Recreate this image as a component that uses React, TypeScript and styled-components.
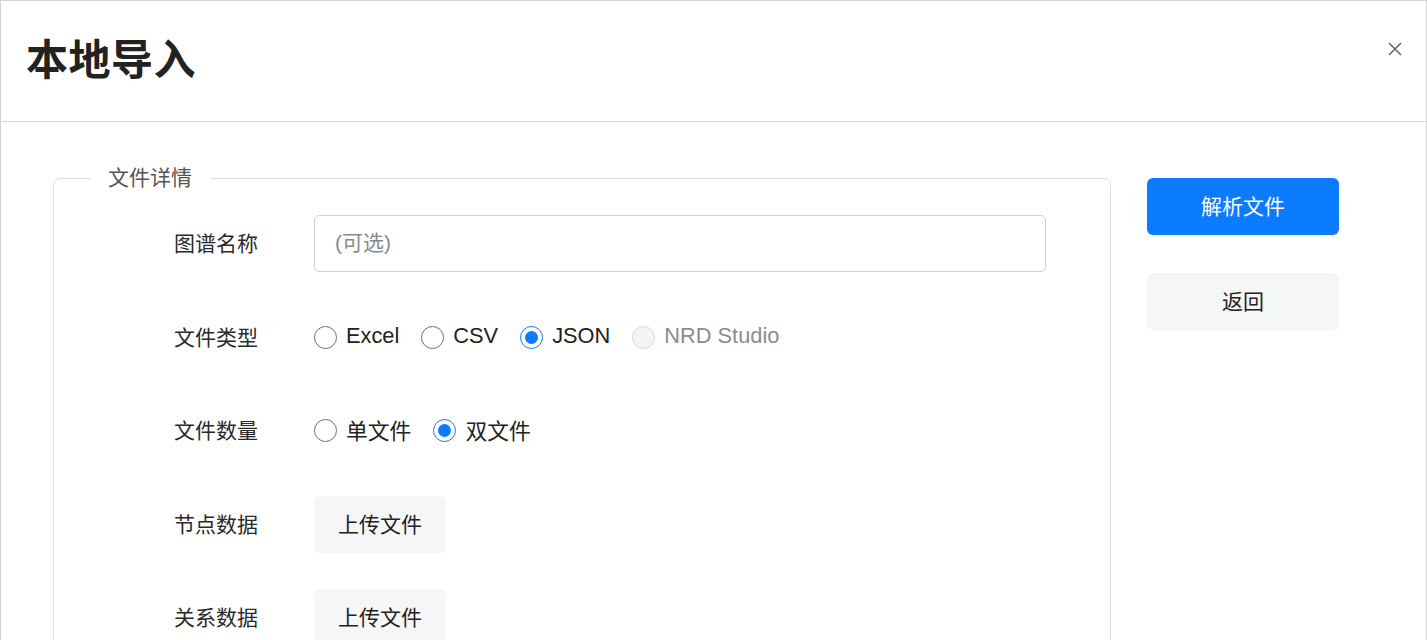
import React from "react";
import styled, { createGlobalStyle } from "styled-components";

const Global = createGlobalStyle`
  html, body { margin: 0; padding: 0; background: #fff; }
  body { font-family: "Liberation Sans", "Noto Sans CJK SC", sans-serif; color: #333; }
  * { box-sizing: border-box; }
`;

const Modal = styled.div`
  width: 1427px;
  height: 640px;
  overflow: hidden;
  border: 1px solid #d4d4d4;
  border-bottom: none;
  background: #fff;
`;

const Header = styled.div`
  height: 121px;
  border-bottom: 1px solid #d8d8d8;
  display: flex;
  align-items: center;
  justify-content: space-between;
  padding: 0 24px 0 25px;
`;

const Title = styled.h1`
  margin: 0;
  font-size: 42px;
  font-weight: 700;
  color: #222;
  letter-spacing: 0.5px;
  line-height: 1;
`;

const CloseButton = styled.button`
  border: none;
  background: none;
  padding: 0;
  width: 14px;
  height: 14px;
  margin-bottom: 25px;
  display: flex;
  align-items: center;
  justify-content: center;
  cursor: pointer;
`;

const Body = styled.div`
  display: flex;
  gap: 36px;
  padding: 41px 0 0 52px;
`;

const FieldSet = styled.fieldset`
  width: 1058px;
  margin: 0;
  border: 1px solid #dcdcdc;
  border-radius: 7px;
  padding: 22px 64px 40px 120px;
  flex: none;
`;

const Legend = styled.legend`
  margin-left: -84px;
  padding: 0 18px;
  font-size: 21px;
  line-height: 30px;
  color: #555;
`;

const Rows = styled.div`
  display: flex;
  flex-direction: column;
  gap: 36.6px;
`;

const Row = styled.div`
  display: grid;
  grid-template-columns: 140px 1fr;
  align-items: center;
  height: 57px;
`;

const Label = styled.span`
  font-size: 21px;
  color: #2a2a2a;
  padding-bottom: 3px;
`;

const TextInput = styled.input`
  height: 57px;
  width: 732px;
  border: 1.5px solid #cfcfcf;
  border-radius: 5px;
  padding: 0 20px 2px;
  font-size: 21px;
  font-family: "Liberation Sans", "Noto Sans CJK SC", sans-serif;
  color: #333;
  outline: none;
  &::placeholder { color: #8a8a8a; }
`;

const RadioGroup = styled.div`
  display: flex;
  align-items: center;
  gap: 22px;
`;

const RadioItem = styled.label<{ $disabled?: boolean }>`
  display: flex;
  align-items: center;
  gap: 9px;
  font-size: 21.8px;
  color: ${(p) => (p.$disabled ? "#8c8c8c" : "#222")};
  cursor: ${(p) => (p.$disabled ? "not-allowed" : "pointer")};
`;

const RadioText = styled.span`
  padding-bottom: 3px;
`;

const Circle = styled.span<{ $checked?: boolean; $disabled?: boolean }>`
  width: 23px;
  height: 23px;
  border-radius: 50%;
  border: 1.5px solid
    ${(p) => (p.$disabled ? "#d9d9d9" : p.$checked ? "#0b7bff" : "#6e6e6e")};
  background: ${(p) => (p.$disabled ? "#f4f4f4" : "#fff")};
  display: flex;
  align-items: center;
  justify-content: center;
  flex: none;
  &::after {
    content: "";
    width: 13px;
    height: 13px;
    border-radius: 50%;
    background: #0b7bff;
    display: ${(p) => (p.$checked ? "block" : "none")};
  }
`;

const Button = styled.button<{ $primary?: boolean }>`
  height: 57px;
  border: none;
  border-radius: 6px;
  padding: 0 0 3px;
  font-size: 21px;
  font-family: "Liberation Sans", "Noto Sans CJK SC", sans-serif;
  background: ${(p) => (p.$primary ? "#0b7bff" : "#f5f6f8")};
  color: ${(p) => (p.$primary ? "#fff" : "#222")};
  cursor: pointer;
`;

const UploadButton = styled(Button)`
  width: 132px;
  justify-self: start;
`;

const Side = styled.div`
  width: 192px;
  display: flex;
  flex-direction: column;
  gap: 38px;
  padding-top: 15px;
`;

type Opt = { label: string; checked?: boolean; disabled?: boolean };

const Radios: React.FC<{ options: Opt[] }> = ({ options }) => (
  <RadioGroup>
    {options.map((o) => (
      <RadioItem key={o.label} $disabled={o.disabled}>
        <Circle $checked={o.checked} $disabled={o.disabled} />
        <RadioText>{o.label}</RadioText>
      </RadioItem>
    ))}
  </RadioGroup>
);

export default function App() {
  return (
    <>
      <Global />
      <Modal>
        <Header>
          <Title>本地导入</Title>
          <CloseButton aria-label="关闭">
            <svg width="14" height="14" viewBox="0 0 14 14">
              <path d="M1.5 1.5 L12.5 12.5 M12.5 1.5 L1.5 12.5" stroke="#666" strokeWidth="1.6" strokeLinecap="round" />
            </svg>
          </CloseButton>
        </Header>
        <Body>
          <FieldSet>
            <Legend>文件详情</Legend>
            <Rows>
              <Row>
                <Label>图谱名称</Label>
                <TextInput placeholder="(可选)" />
              </Row>
              <Row>
                <Label>文件类型</Label>
                <Radios
                  options={[
                    { label: "Excel" },
                    { label: "CSV" },
                    { label: "JSON", checked: true },
                    { label: "NRD Studio", disabled: true },
                  ]}
                />
              </Row>
              <Row>
                <Label>文件数量</Label>
                <Radios options={[{ label: "单文件" }, { label: "双文件", checked: true }]} />
              </Row>
              <Row>
                <Label>节点数据</Label>
                <UploadButton>上传文件</UploadButton>
              </Row>
              <Row>
                <Label>关系数据</Label>
                <UploadButton>上传文件</UploadButton>
              </Row>
            </Rows>
          </FieldSet>
          <Side>
            <Button $primary>解析文件</Button>
            <Button>返回</Button>
          </Side>
        </Body>
      </Modal>
    </>
  );
}
